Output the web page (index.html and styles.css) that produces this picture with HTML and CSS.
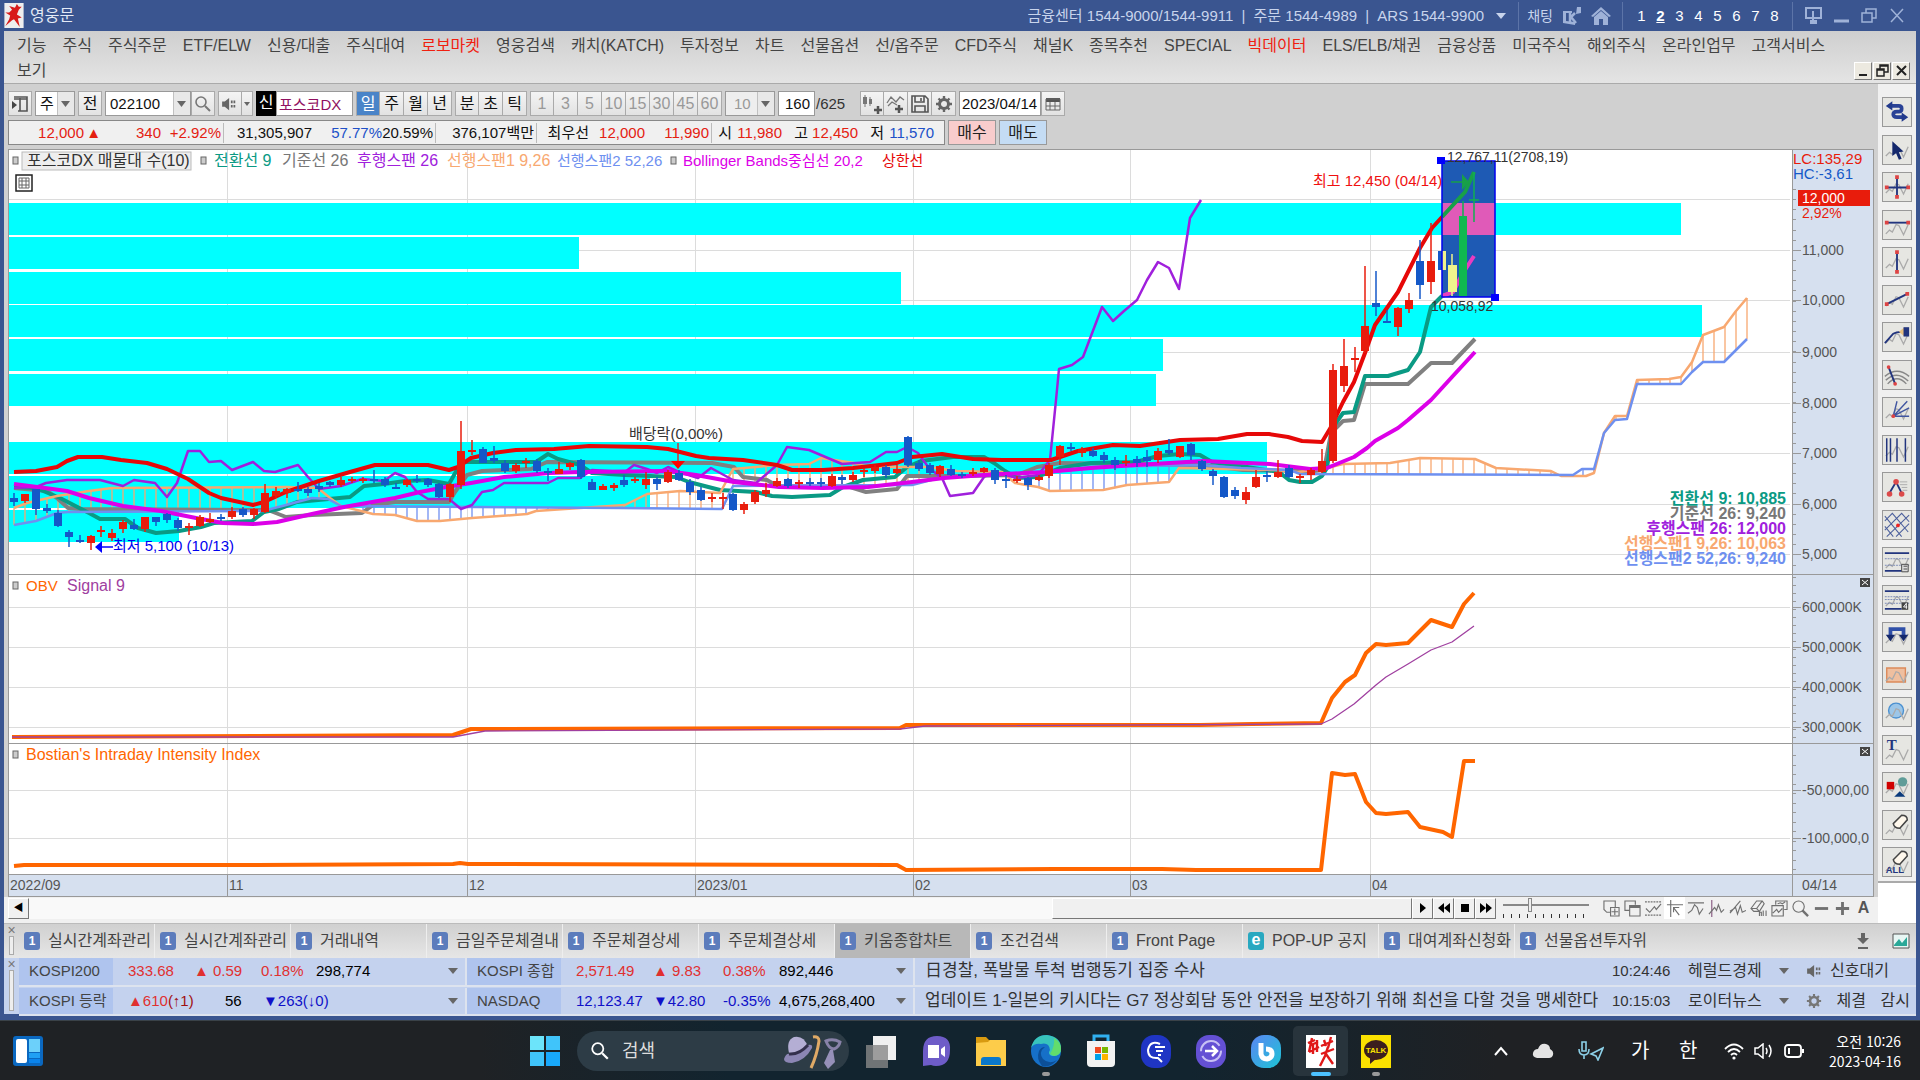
FILE: index.html
```
<!DOCTYPE html>
<html lang="ko">
<head>
  <meta charset="UTF-8">
  <meta name="viewport" content="width=device-width, initial-scale=1.0">
  <title>영웅문</title>
  <link rel="stylesheet" href="styles.css">
</head>
<body>
  <svg class="defs" aria-hidden="true">
    <symbol id="wave" viewBox="0 0 30 29"><path d="M3 21l4-4 3 2 4-8 3 1 5 10 5-11" fill="none" stroke="#aaa" stroke-width="1.4"/></symbol>
    <symbol id="hero" viewBox="0 0 20 26"><path d="M0 0h20v26H0z" fill="#eee"/><path d="M13 1l-2 4-6-2 3 4-3 3-4 0 5 3-1 4-4 7 7-6 2-1 6 8-2-9 4-1-5-3 2-5 3-3-3 0z" fill="#d81a1a"/></symbol>
    <symbol id="speaker" viewBox="0 0 20 16"><path d="M1 5h3l5-4v14l-5-4H1z" fill="#666"/><path d="M12 4v3m0 2v3m3-8v3m0 2v3" stroke="#666" stroke-width="2"/></symbol>
    <symbol id="search" viewBox="0 0 18 18"><circle cx="7" cy="7" r="5" fill="none" stroke="currentColor" stroke-width="1.6"/><path d="M11 11l5 5" stroke="currentColor" stroke-width="2"/></symbol>
    <symbol id="gear" viewBox="0 0 18 18"><circle cx="9" cy="9" r="4.5" fill="none" stroke="currentColor" stroke-width="3"/><path d="M9 1v3m0 10v3M1 9h3m10 0h3M3.500 3.500l2 2m7 7l2 2m0-11l-2 2m-7 7l-2 2" stroke="currentColor" stroke-width="2.400"/></symbol>
  </svg>

  <div class="app">
    <header class="titlebar">
      <svg class="logo" width="20" height="25"><use href="#hero"/></svg>
      <h1>영웅문</h1>
      <div class="phones">금융센터 1544-9000/1544-9911 <i>|</i> 주문 1544-4989 <i>|</i> ARS 1544-9900 <span class="caret light"></span></div>
      <div class="quick">
        <a href="#">채팅</a>
        <svg width="20" height="20" viewBox="0 0 20 20"><path d="M1 5h9v2H4v8l9 1v3l-12-2z" fill="#9fb2d8"/><path d="M8 7v9m0-4l5-5m-4 4l5 6" stroke="#9fb2d8" stroke-width="2.500"/><path d="M15 1h4v6l-5 1z" fill="#9fb2d8"/></svg>
        <svg width="20" height="20" viewBox="0 0 20 20"><path d="M0 10L10 1l10 9-2 1-8-7-8 7zM3 11l7-6 7 6v8h-5v-6H8v6H3z" fill="#9fb2d8"/></svg>
      </div>
      <div class="screens">
        <button>1</button><button class="on">2</button><button>3</button><button>4</button><button>5</button><button>6</button><button>7</button><button>8</button>
      </div>
      <div class="winbtns">
        <button aria-label="화면"><svg width="17" height="17" viewBox="0 0 17 17"><path d="M1 1h15v10H1zM6 14h5v2H6zM8 4v9" fill="none" stroke="#9fb2d8" stroke-width="2"/></svg></button>
        <button aria-label="최소화"><svg width="17" height="17" viewBox="0 0 17 17"><path d="M1 14h15" stroke="#9fb2d8" stroke-width="3"/></svg></button>
        <button aria-label="복원"><svg width="17" height="17" viewBox="0 0 17 17"><path d="M1 6h10v9H1zM5 6V2h10v9h-4" fill="none" stroke="#9fb2d8" stroke-width="1.500"/></svg></button>
        <button aria-label="닫기"><svg width="17" height="17" viewBox="0 0 17 17"><path d="M2 2l12 13M14 2L2 15" stroke="#9fb2d8" stroke-width="1.500"/></svg></button>
      </div>
    </header>

    <nav class="menubar">
      <div class="menu">
        <a href="#">기능</a><a href="#">주식</a><a href="#">주식주문</a><a href="#">ETF/ELW</a><a href="#">신용/대출</a><a href="#">주식대여</a><a href="#" class="hot">로보마켓</a><a href="#">영웅검색</a><a href="#">캐치(KATCH)</a><a href="#">투자정보</a><a href="#">차트</a><a href="#">선물옵션</a><a href="#">선/옵주문</a><a href="#">CFD주식</a><a href="#">채널K</a><a href="#">종목추천</a><a href="#">SPECIAL</a><a href="#" class="hot">빅데이터</a><a href="#">ELS/ELB/채권</a><a href="#">금융상품</a><a href="#">미국주식</a><a href="#">해외주식</a><a href="#">온라인업무</a><a href="#">고객서비스</a>
      </div>
      <div class="menu second">
        <a href="#">보기</a>
        <div class="childbtns">
          <button aria-label="창 최소화"><svg width="15" height="15" viewBox="0 0 15 15"><path d="M3 12h8" stroke="#222" stroke-width="2"/></svg></button>
          <button aria-label="창 복원"><svg width="15" height="15" viewBox="0 0 15 15"><path d="M2 6h7v7H2zM5 6V2h8v7H9M2 7h7M5 3h8" fill="none" stroke="#222" stroke-width="1.500"/></svg></button>
          <button aria-label="창 닫기"><svg width="15" height="15" viewBox="0 0 15 15"><path d="M3 3l9 9M12 3l-9 9" stroke="#222" stroke-width="2"/></svg></button>
        </div>
      </div>
    </nav>

    <main class="workspace">
      <section class="chart-window">
        <div class="toolbar">
          <button class="btn" aria-label="목록"><svg width="18" height="18" viewBox="0 0 18 18"><path d="M1 6v8l5-4z" fill="#444"/><path d="M3 2h13v14H7M9 3v13M3 4h13" fill="none" stroke="#555" stroke-width="1.600"/></svg></button>
          <select class="field w40" aria-label="종목 구분"><option>주</option></select>
          <button class="btn">전</button>
          <span class="group">
            <select class="field w86" aria-label="종목 코드"><option>022100</option></select>
            <button class="btn" aria-label="종목 찾기"><svg width="18" height="18" color="#777"><use href="#search"/></svg></button>
          </span>
          <span class="group">
            <button class="btn" aria-label="소리"><svg width="18" height="14"><use href="#speaker"/></svg></button>
            <button class="btn slim" aria-label="소리 설정"><span class="caret"></span></button>
          </span>
          <span class="group"><b class="new">신</b><input class="field name" value="포스코DX" aria-label="종목명"></span>
          <span class="group">
            <button class="btn on">일</button><button class="btn">주</button><button class="btn">월</button><button class="btn">년</button>
          </span>
          <span class="group"><button class="btn">분</button><button class="btn">초</button><button class="btn">틱</button></span>
          <span class="group off">
            <button class="btn">1</button><button class="btn">3</button><button class="btn">5</button><button class="btn">10</button><button class="btn">15</button><button class="btn">30</button><button class="btn">45</button><button class="btn">60</button>
          </span>
          <select class="field w50 off" aria-label="분봉"><option>10</option></select>
          <span class="group count"><input class="field w37" value="160" aria-label="봉 개수"><span>/625</span></span>
          <span class="group">
            <button class="btn" aria-label="차트 종류"><svg width="20" height="20" viewBox="0 0 20 20"><path d="M3 1v12M8 3v9" stroke="#777"/><path d="M1 3h4v7H1zM7 5h3v5H7z" fill="#777"/><path d="M12 16h8m-4-4v8" stroke="#555" stroke-width="2.500"/></svg></button>
            <button class="btn" aria-label="지표 추가"><svg width="20" height="20" viewBox="0 0 20 20"><path d="M1 9l4-6 5 5 4-5 4 3M2 12l4-4 5 3" fill="none" stroke="#777" stroke-width="1.300"/><path d="M9 15h8m-4-4v8" stroke="#555" stroke-width="2.500"/></svg></button>
            <button class="btn" aria-label="저장"><svg width="18" height="18" viewBox="0 0 18 18"><path d="M1 1h13l3 3v13H1zM4 1v6h9V1M4 17v-6h10v6M10 3v3" fill="none" stroke="#555" stroke-width="1.600"/></svg></button>
            <button class="btn" aria-label="설정"><svg width="18" height="18" color="#666"><use href="#gear"/></svg></button>
          </span>
          <span class="group">
            <input class="field date" value="2023/04/14" aria-label="조회일">
            <button class="btn" aria-label="달력"><svg width="16" height="16" viewBox="0 0 16 16"><path d="M1 2h14v4H1z" fill="#555"/><path d="M1 3h14v11H1zM5 6v8m5-8v8M1 10h14" fill="none" stroke="#666"/></svg></button>
          </span>
        </div>

        <div class="quotebar">
          <div class="quote">
            <span class="up">12,000</span><span class="up mark">▲</span><span class="up">340</span><span class="up sep">+2.92%</span>
            <span>31,305,907</span><span class="down">57.77%</span><span class="sep">20.59%</span><span class="sep">376,107백만</span>
            <span>최우선</span><span class="up">12,000</span><span class="up sep">11,990</span>
            <span>시</span><span class="up">11,980</span><span>고</span><span class="up">12,450</span><span>저</span><span class="down">11,570</span>
          </div>
          <button class="trade buy">매수</button>
          <button class="trade sell">매도</button>
        </div>

        <svg id="chart" class="chart" viewBox="8 149 1866 748" role="img" aria-label="포스코DX 일봉 차트"></svg>

        <div class="scrollrow">
          <button class="arrow" aria-label="왼쪽">◀</button>
          <div class="track"><div class="thumb"></div></div>
          <button class="arrow" aria-label="재생"><svg width="12" height="12"><path d="M3 1v10l6-5z"/></svg></button>
          <button class="arrow" aria-label="뒤로"><svg width="12" height="12"><path d="M6 1v10L0 6zM12 1v10L6 6z"/></svg></button>
          <button class="arrow" aria-label="정지"><svg width="12" height="12"><path d="M2 2h8v8H2z"/></svg></button>
          <button class="arrow" aria-label="앞으로"><svg width="12" height="12"><path d="M0 1v10l6-5zM6 1v10l6-5z"/></svg></button>
          <div class="slider"><input type="range" min="0" max="100" value="30" aria-label="재생 속도"></div>
          <div class="minitools">
            <button aria-label="추가"><svg viewBox="0 0 18 18"><path d="M8 13H4l-3-3V1h12v7M8 8h9v9H8zM12.500 9v7M9 12.500h7"/></svg></button>
            <button aria-label="겹치기"><svg viewBox="0 0 18 18"><path d="M6 11H1V1h11v4M6 6h11v11H6z"/><path d="M6 7h11" stroke-width="3"/></svg></button>
            <button aria-label="범위"><svg viewBox="0 0 18 18"><path d="M0 2h17M0 16h17" stroke-dasharray="2 1"/><path d="M1 9l4 4 5-6 2 3 5-6"/></svg></button>
            <button aria-label="십자선" class="on"><svg viewBox="0 0 18 18"><path d="M1 5h17M5 0v18M8 8l6 8M8 13V8h6"/></svg></button>
            <button aria-label="수평선"><svg viewBox="0 0 18 18"><path d="M1 3h17M1 14l4-3 3-6 3 3 2 7 4-6"/></svg></button>
            <button aria-label="수직선"><svg viewBox="0 0 18 18"><path d="M4 0v18" stroke="#86587f"/><path d="M1 15l6-7 2 3 2-6 3 8 3-3"/></svg></button>
            <button aria-label="추세선"><svg viewBox="0 0 18 18"><path d="M1 14L12 1M1 12l6-4 2 7 3-9 2 7 4-2"/></svg></button>
            <button aria-label="모두 지우기"><svg viewBox="0 0 18 18"><path d="M1 9l6-8h6l2 3-5 8H4zM1 9h6l3 3M7 9l6-8M10 17v-4h2v4m2-6v6m3-6v6"/></svg></button>
            <button aria-label="창 배열"><svg viewBox="0 0 18 18"><path d="M5 5V1h12v9h-3M1 6h12v11H1zM2 14l4-4 2 3 4-4M7 4l3-1 2 1 3-2"/></svg></button>
            <button aria-label="돋보기"><svg viewBox="0 0 18 18"><circle cx="7" cy="7" r="6"/><path d="M11 11l6 6" stroke-width="2.500"/></svg></button>
            <button aria-label="축소"><svg viewBox="0 0 18 18"><path d="M2 9h14" stroke-width="3"/></svg></button>
            <button aria-label="확대"><svg viewBox="0 0 18 18"><path d="M2 9h14M9 2v14" stroke-width="3"/></svg></button>
            <button aria-label="자동"><b>A</b></button>
          </div>
        </div>
      </section>

      <aside class="tools">
        <div class="tool-list">
          <button aria-label="전환"><svg viewBox="0 0 30 29"><path d="M9 8h8q3 0 3 3t-3 3h-2q-4 0-4 3t4 3h6" fill="none" stroke="#2a4296" stroke-width="4"/><path d="M3 8l7-5v10zM27 20l-7-5v10z" fill="#223a8c"/></svg></button>
          <button aria-label="선택"><svg viewBox="0 0 30 29"><use href="#wave"/><path d="M10 5v16l4-3 3 7 3-1-3-7 5-1z" fill="#14286c"/></svg></button>
          <button aria-label="십자선"><svg viewBox="0 0 30 29"><use href="#wave"/><path d="M4 15h23M15 4v21" stroke="#22357e" stroke-width="2"/><path d="M2 13h4v4H2zM25 13h4v4h-4zM13 2h4v4h-4zM13 23h4v4h-4z" fill="#d44"/></svg></button>
          <button aria-label="수평선"><svg viewBox="0 0 30 29"><use href="#wave" y="3"/><path d="M4 12h23" stroke="#22357e" stroke-width="2"/><path d="M2 10h4v4H2zM25 10h4v4h-4z" fill="#d44"/></svg></button>
          <button aria-label="수직선"><svg viewBox="0 0 30 29"><use href="#wave"/><path d="M15 4v21" stroke="#22357e" stroke-width="2"/><path d="M13 2h4v4h-4zM13 23h4v4h-4z" fill="#d44"/></svg></button>
          <button aria-label="추세선"><svg viewBox="0 0 30 29"><use href="#wave"/><path d="M4 19L26 8" stroke="#22357e" stroke-width="2"/><path d="M2 17h4v4H2zM24 6h4v4h-4z" fill="#d44"/></svg></button>
          <button aria-label="연필"><svg viewBox="0 0 30 29"><use href="#wave"/><path d="M2 21l9-10q3-2 9-2" fill="none" stroke="#22357e" stroke-width="2"/><path d="M17 9l6-5v10z" fill="#e8c080"/><path d="M22 4h6v10h-6z" fill="#22357e"/></svg></button>
          <button aria-label="호"><svg viewBox="0 0 30 29"><path d="M2 16q13-11 26 0M3 20q12-11 24 1M5 24q10-11 20 0" fill="none" stroke="#888" stroke-width="1.500"/><path d="M6 6l7 18" stroke="#22357e" stroke-width="2"/><circle cx="6" cy="6" r="2" fill="#d44"/><circle cx="13" cy="24" r="2" fill="#d44"/></svg></button>
          <button aria-label="부채꼴"><svg viewBox="0 0 30 29"><use href="#wave"/><path d="M11 19L15 3M11 19L26 3M11 19l17-9M11 19h17" stroke="#4055a0" stroke-width="1.500"/><circle cx="11" cy="19" r="2" fill="#d44"/></svg></button>
          <button aria-label="시간대"><svg viewBox="0 0 30 29"><use href="#wave"/><path d="M4 2v25M8 2v25M15 2v25M24 2v25" stroke="#22357e" stroke-width="1.600"/></svg></button>
          <button aria-label="패턴"><svg viewBox="0 0 30 29"><path d="M18 9h8M18 12h8M20 15h6M21 18h5" stroke="#aaa"/><path d="M7 21l7-12 6 12" fill="none" stroke="#22357e" stroke-width="2"/><g fill="#dc4a4a"><circle cx="7" cy="22" r="3"/><circle cx="14" cy="9" r="3"/><circle cx="20" cy="22" r="3"/></g></svg></button>
          <button aria-label="격자"><svg viewBox="0 0 30 29"><path d="M2 10l8-8 17 20M2 20L20 2l8 9M4 27L28 4M2 5l18 22M2 16l9 11M14 27l14-14" fill="none" stroke="#4b5f9c" stroke-width="1.100"/><circle cx="16" cy="15" r="2" fill="#e22"/></svg></button>
          <button aria-label="되돌림"><svg viewBox="0 0 30 29"><use href="#wave"/><path d="M2 5h26M2 24h18" stroke="#22357e" stroke-width="2"/><path d="M2 11h26M2 18h26" stroke="#7585b5" stroke-dasharray="2 1"/><path d="M20 17h7v8h-7zM22 19h4M22 22h4" fill="#ddd" stroke="#444"/></svg></button>
          <button aria-label="4등분"><svg viewBox="0 0 30 29"><use href="#wave"/><path d="M2 5h26M2 24h18" stroke="#22357e" stroke-width="2"/><path d="M2 11h26M2 14h26M2 18h26" stroke="#7585b5" stroke-dasharray="2 1"/><path d="M20 17h7v8h-7z" fill="#444"/><path d="M25 24v-6l-3 4h4" fill="none" stroke="#fff"/></svg></button>
          <button aria-label="이동"><svg viewBox="0 0 30 29"><use href="#wave"/><path d="M8 13V6h14v7" fill="none" stroke="#3050a8" stroke-width="4"/><path d="M3 12h10l-5 7zM17 12h10l-5 7z" fill="#14286c"/></svg></button>
          <button aria-label="사각형"><svg viewBox="0 0 30 29"><path d="M4 7h20v15H4z" fill="#efbf9f" stroke="#dc8a5a" stroke-width="1.500"/><use href="#wave"/></svg></button>
          <button aria-label="원"><svg viewBox="0 0 30 29"><circle cx="14" cy="13" r="8" fill="#9cc6e8" stroke="#4a90d0" stroke-width="1.500"/><use href="#wave"/></svg></button>
          <button aria-label="글자"><svg viewBox="0 0 30 29"><use href="#wave" y="3"/><text x="4" y="15" class="ico-t">T</text></svg></button>
          <button aria-label="도형"><svg viewBox="0 0 30 29"><use href="#wave"/><path d="M4 9h8v8H4z" fill="#d00000"/><circle cx="21" cy="9" r="5" fill="#5f9c98"/><path d="M12 25l6-6 6 6z" fill="#0a3a7c"/></svg></button>
          <button aria-label="지우개"><svg viewBox="0 0 30 29"><use href="#wave" y="3"/><path d="M11 13l9-9q6 0 6 5l-8 9q-6 0-7-5z" fill="#fff8ec" stroke="#444" stroke-width="1.600"/></svg></button>
          <button aria-label="전체 지우개"><svg viewBox="0 0 30 29"><use href="#wave" y="3"/><path d="M11 12l9-9q6 0 6 5l-8 9q-6 0-7-5z" fill="#fff8ec" stroke="#444" stroke-width="1.600"/><text x="3" y="26" class="ico-all">ALL</text></svg></button>
        </div>
        <div class="tools-end"></div>
      </aside>
    </main>

    <nav class="tabs">
      <div class="grip"><button aria-label="탭 닫기">×</button><i></i></div>
      <button class="tab"><b>1</b>실시간계좌관리</button>
      <button class="tab"><b>1</b>실시간계좌관리</button>
      <button class="tab"><b>1</b>거래내역</button>
      <button class="tab"><b>1</b>금일주문체결내</button>
      <button class="tab"><b>1</b>주문체결상세</button>
      <button class="tab"><b>1</b>주문체결상세</button>
      <button class="tab on"><b>1</b>키움종합차트</button>
      <button class="tab"><b>1</b>조건검색</button>
      <button class="tab"><b>1</b>Front Page</button>
      <button class="tab"><b class="web">e</b>POP-UP 공지</button>
      <button class="tab"><b>1</b>대여계좌신청화</button>
      <button class="tab"><b>1</b>선물옵션투자위</button>
      <div class="tab-tools">
        <svg width="14" height="18" viewBox="0 0 14 18"><path d="M5 1h4v5h4l-6 6-6-6h4zM2 15h10v2H2z" fill="#666"/></svg>
        <svg width="18" height="16" viewBox="0 0 18 16"><path d="M1 1h16v14H1z" fill="#e8f6f4" stroke="#555"/><path d="M2 12l5-6 3 4 5-6v9H2z" fill="#2aa898"/></svg>
      </div>
    </nav>

    <section class="ticker">
      <div class="grip"><button aria-label="시세줄 닫기">×</button><i></i></div>
      <div class="rows">
        <div class="row">
          <b class="label">KOSPI200</b>
          <div class="cells"><span class="rise">333.68</span><span class="rise">▲ 0.59</span><span class="rise">0.18%</span><span>298,774</span><i class="caret"></i></div>
          <b class="label">KOSPI 종합</b>
          <div class="cells wide"><span class="rise">2,571.49</span><span class="rise">▲ 9.83</span><span class="rise">0.38%</span><span>892,446</span><i class="caret"></i></div>
          <a href="#" class="news">日경찰, 폭발물 투척 범행동기 집중 수사</a>
          <time>10:24:46</time><span class="source">헤럴드경제</span><i class="caret"></i>
          <div class="status"><svg width="18" height="14"><use href="#speaker"/></svg><a href="#">신호대기</a></div>
        </div>
        <div class="row">
          <b class="label">KOSPI 등락</b>
          <div class="cells breadth"><span class="rise">▲610<em>(↑1)</em></span><span>56</span><span class="fall">▼263(↓0)</span><i class="caret"></i></div>
          <b class="label">NASDAQ</b>
          <div class="cells wide"><span class="fall">12,123.47</span><span class="fall">▼42.80</span><span class="fall">-0.35%</span><span>4,675,268,400</span><i class="caret"></i></div>
          <a href="#" class="news">업데이트 1-일본의 키시다는 G7 정상회담 동안 안전을 보장하기 위해 최선을 다할 것을 맹세한다</a>
          <time>10:15:03</time><span class="source">로이터뉴스</span><i class="caret"></i>
          <div class="status split"><svg width="16" height="16" color="#777"><use href="#gear"/></svg><a href="#">체결</a><a href="#">감시</a></div>
        </div>
      </div>
    </section>
  </div>

  <footer class="taskbar">
    <div class="side">
      <button aria-label="위젯"><svg width="30" height="30" viewBox="0 0 30 30"><rect width="30" height="30" rx="3" fill="#0a68c0"/><rect x="3" y="3" width="11" height="24" rx="2" fill="#fff"/><path d="M16 3h11v13H16z" fill="#6cd0fa"/><path d="M16 17h11v5H16z" fill="#20a0f4"/><path d="M16 23h11v4H16z" fill="#0a84ec"/></svg></button>
    </div>
    <div class="apps">
      <button aria-label="시작"><svg width="30" height="30" viewBox="0 0 30 30"><path d="M0 0h14v14H0z" fill="#6ce4fa"/><path d="M16 0h14v14H16zM0 16h14v14H0z" fill="#40c4fa"/><path d="M16 16h14v14H16z" fill="#18a8fa"/></svg></button>
      <label class="find"><svg width="20" height="20"><use href="#search" /></svg><input type="search" placeholder="검색" aria-label="검색">
        <svg width="60" height="38" viewBox="0 0 60 38"><path d="M6 21Q3 8 11 5q10-2 14 10-8 8-19 6z" fill="#b4aed4"/><path d="M1 27q2-6 6-5 10 1 18-9 5-1 4 3-7 13-20 15-8 0-8-4z" fill="#8c86b4"/><path d="M6 22q10 1 19-9" fill="none" stroke="#34304c" stroke-width="3"/><path d="M28 36q6-13 8-27 0-5-6-4" fill="none" stroke="#e0aa66" stroke-width="3"/><path d="M43 9q3 8 8 8 5-2 6-7-7-4-14-1z" fill="none" stroke="#8882a8" stroke-width="3"/><path d="M47 18l-6 13 4 6 7-7-2-12z" fill="#9690b8"/></svg>
      </label>
      <button aria-label="작업 보기"><svg width="30" height="34" viewBox="0 0 30 34"><path d="M7 2h23v24H7z" fill="#f0f0f0"/><path d="M0 11h22v23H0z" fill="#888" opacity=".8"/></svg></button>
      <button aria-label="채팅"><svg width="30" height="34" viewBox="0 0 30 34"><path d="M2 32V17q0-15 14-15t13 14q0 16-14 16-3 0-5-1z" fill="#6e5cc8"/><path d="M7 11h11v13H7zM20 15l4-3v11l-4-3z" fill="#fff"/></svg></button>
      <button aria-label="탐색기"><svg width="30" height="34" viewBox="0 0 30 34"><path d="M0 3h10l3 3h17v25H0z" fill="#d89a10"/><path d="M0 9l12-1 2-2h16v26H0z" fill="#fdcc4a"/><path d="M5 31v-5q0-3 3-3h14q3 0 3 3v5z" fill="#0a78cc"/></svg></button>
      <button class="running" aria-label="엣지"><svg width="30" height="34" viewBox="0 0 30 34"><ellipse cx="15" cy="17" rx="15" ry="16" fill="#1670c8"/><path d="M0 14Q3 1 16 1q14 2 14 13 0 9-9 8-5-2-2-6-1-8-9-6Q3 9 0 14z" fill="#38c4bc"/><path d="M23 4q7 4 7 11 0 6-7 7l-4-2q5-8 4-16z" fill="#62dc6c"/><path d="M14 13q-7 5-2 12 6 6 14 1-7 8-15 6Q5 25 8 17q2-4 6-4z" fill="#0c4f98"/></svg></button>
      <button aria-label="스토어"><svg width="30" height="34" viewBox="0 0 30 34"><path d="M8 8V2h14v6" fill="none" stroke="#30b0f0" stroke-width="3"/><path d="M1 7h28v22q0 4-4 4H5q-4 0-4-4z" fill="#f2f2f2"/><path d="M9 13h6v6H9z" fill="#f04a20"/><path d="M16 13h6v6h-6z" fill="#78b800"/><path d="M9 20h6v6H9z" fill="#00a0e8"/><path d="M16 20h6v6h-6z" fill="#fcb400"/></svg></button>
      <button aria-label="퀵서치"><svg width="30" height="34" viewBox="0 0 30 34"><rect y="1" width="30" height="33" rx="13" fill="#1f35c4"/><path d="M19 10q-10-4-12 6 0 9 10 8l4 4M14 13h10M15 17h7M17 21h3" fill="none" stroke="#fff" stroke-width="2"/></svg></button>
      <button aria-label="퀵셰어"><svg width="30" height="34" viewBox="0 0 30 34"><rect y="1" width="30" height="33" rx="13" fill="#6450d4"/><circle cx="15" cy="17" r="10" fill="none" stroke="#c8c0f4" stroke-width="2" stroke-dasharray="26 5"/><path d="M9 17h11m-4-5l5 5-5 5" fill="none" stroke="#fff" stroke-width="2.500"/></svg></button>
      <button aria-label="빅스비"><svg width="30" height="34" viewBox="0 0 30 34"><defs><linearGradient id="bix" x1="0" y1="0" x2="1" y2="1"><stop offset="0" stop-color="#5c86f4"/><stop offset="1" stop-color="#1cc4d4"/></linearGradient></defs><rect y="1" width="30" height="33" rx="13" fill="url(#bix)"/><path d="M10 9v11q1 5 6 5 5-1 5-5 0-5-6-5" fill="none" stroke="#fff" stroke-width="5"/></svg></button>
      <button class="running active" aria-label="영웅문"><svg width="30" height="34" viewBox="0 0 30 34"><path d="M0 1h30v33H0z" fill="#fff"/><path d="M2 9l7-3M6 4L3 18M5 11l7-3M7 10v10M11 6v12M3 18l10-5M15 12l12-5M18 6l2 6M25 3l-3 11M15 20l13-5M22 13l-3 9-5 10M20 20l7 10" fill="none" stroke="#e01818" stroke-width="2.400"/></svg></button>
      <button class="running" aria-label="카카오톡"><svg width="30" height="34" viewBox="0 0 30 34"><path d="M0 1h30v33H0z" fill="#fae100"/><ellipse cx="15" cy="16" rx="12" ry="10" fill="#3b1e1e"/><path d="M9 23v7l7-6z" fill="#3b1e1e"/><text x="15" y="19" class="talk">TALK</text></svg></button>
    </div>
    <div class="tray">
      <svg width="14" height="12" viewBox="0 0 14 12"><path d="M1 10l6-7 6 7" fill="none" stroke="#fff" stroke-width="2"/></svg>
      <svg width="22" height="16" viewBox="0 0 22 16"><path d="M5 15q-5-1-4-5t5-4q2-6 8-5 4 1 4 5 4 2 3 6-1 3-4 3z" fill="#e4e4e4"/></svg>
      <svg width="26" height="20" viewBox="0 0 26 20"><path d="M4 1h4v9H4zM1 8q0 6 5 6t5-6M6 14v4" fill="none" stroke="#8cd0e8" stroke-width="1.600"/><path d="M13 13l12-6-5 12-2-4z" fill="none" stroke="#8cd0e8" stroke-width="1.600"/></svg>
      <button>가</button>
      <button>한</button>
      <div class="system">
        <svg width="20" height="18" viewBox="0 0 20 18"><path d="M1 7q9-9 18 0M4 10q6-6 12 0M7 13q3-3 6 0" fill="none" stroke="#fff" stroke-width="1.800"/><circle cx="10" cy="16" r="1.600" fill="#fff"/></svg>
        <svg width="20" height="16" viewBox="0 0 20 16"><path d="M1 5h3l5-4v14l-5-4H1zM12 5q2 3 0 6M15 2q4 6 0 12" fill="none" stroke="#fff" stroke-width="1.500"/></svg>
        <svg width="21" height="16" viewBox="0 0 21 16"><rect x="1" y="2" width="16" height="12" rx="3" fill="none" stroke="#fff" stroke-width="1.800"/><path d="M4 5h2v6H4zM18 6h2v4h-2z" fill="#fff"/></svg>
      </div>
      <div class="clock"><span>오전 10:26</span><span>2023-04-16</span></div>
    </div>
  </footer>
  <script src="chart.js"></script>
</body>
</html>
```
FILE: styles.css
```
* {
  box-sizing: border-box;
}

body {
  margin: 0;
  min-height: 100vh;
  display: flex;
  flex-direction: column;
  background: #1f2225;
  color: #222;
  font-family: "Liberation Sans", "Noto Sans CJK KR", sans-serif;
  font-size: 16px;
  line-height: 20px;
  overflow-x: hidden;
}

button, input, select {
  font: inherit;
  color: inherit;
  margin: 0;
  padding: 0;
}

button {
  border: 0;
  background: none;
  display: flex;
  align-items: center;
  justify-content: center;
}

a {
  color: inherit;
  text-decoration: none;
}

svg {
  flex: none;
}

.defs {
  position: absolute;
  width: 0;
  height: 0;
}

.caret {
  display: inline-block;
  border: 5px solid transparent;
  border-top: 6px solid #666;
  border-bottom: 0;
}

.caret.light {
  border-top-color: #c8d4ec;
  margin: 0 0 2px 8px;
}

.app {
  flex: 1;
  display: flex;
  flex-direction: column;
  padding: 0 4px 6px;
  background: #3a5590;
}

/* title bar */
.titlebar {
  display: flex;
  align-items: center;
  height: 31px;
  color: #c8d4ec;
  font-size: 15px;
}

.titlebar h1 {
  flex: 1;
  margin: 0 0 0 6px;
  font-size: 16px;
  font-weight: normal;
  color: #e4eaf6;
}

.titlebar i {
  font-style: normal;
  padding: 0 4px;
}

.phones {
  padding-right: 12px;
}

.quick, .screens, .winbtns {
  display: flex;
  align-items: center;
  height: 28px;
  border-left: 1px solid #5c74a8;
}

.quick {
  gap: 9px;
  padding: 0 11px 0 8px;
  font-size: 14px;
}

.screens {
  padding: 0 8px 0 9px;
}

.screens button {
  width: 19px;
  color: #fff;
}

.screens .on {
  text-decoration: underline;
  font-weight: bold;
}

.winbtns {
  gap: 11px;
  padding: 0 10px 0 12px;
}

/* menu */
.menubar {
  height: 53px;
  background: linear-gradient(#cfcfcf, #e4e4e4);
  border-bottom: 1px solid #aaa;
  padding: 2px 6px 0 13px;
  color: #444;
}

.menu {
  display: flex;
  gap: 16px;
  height: 25px;
  align-items: center;
  white-space: nowrap;
}

.hot {
  color: #f02010;
}

.childbtns {
  display: flex;
  gap: 1px;
  margin-left: auto;
}

.childbtns button {
  width: 18px;
  height: 18px;
  background: #ece9e0;
  border: 1px solid;
  border-color: #fff #777 #777 #fff;
}

/* chart window */
.workspace {
  display: flex;
  background: #d0d0d0;
}

.chart-window {
  flex: 1;
  min-width: 0;
}

.toolbar {
  display: flex;
  gap: 3px;
  padding: 7px 4px 4px;
}

.group {
  display: flex;
}

.btn {
  width: 24px;
  height: 25px;
  color: #111;
  background: linear-gradient(#f4f4f4, #e2e2e2);
  border: 1px solid #aaa;
}

.btn.slim {
  width: 11px;
}

.group .btn + .btn {
  border-left: 0;
}

.btn.on {
  background: #4a84c8;
  color: #fff;
}

.off .btn {
  color: #999;
}

.slim .caret {
  border-width: 4px 3px 0;
}

.field {
  height: 25px;
  border: 1px solid #999;
  border-radius: 0;
  background: #fff;
  color: #111;
  font-size: 15px;
  padding: 0 4px;
}

select.field {
  appearance: none;
  background: #fff url("data:image/svg+xml,%3Csvg xmlns='http://www.w3.org/2000/svg' width='17' height='25'%3E%3Cpath d='M0 0h17v25H0z' fill='%23e8e8e8'/%3E%3Cpath d='M0 0v25' stroke='%23999'/%3E%3Cpath d='M4 10h9l-4.5 6z' fill='%23666'/%3E%3C/svg%3E") right center no-repeat;
}

select.off {
  color: #999;
  background-color: #eee;
}

.w40 { width: 40px; }
.w86 { width: 86px; }
.w50 { width: 50px; padding-left: 8px; }
.w37 { width: 37px; text-align: right; }
.date { width: 82px; padding: 0 2px; }

.new {
  width: 20px;
  background: #000;
  color: #fff;
  font-weight: normal;
  text-align: center;
  line-height: 24px;
}

.field.name {
  width: 77px;
  padding: 0 2px;
  color: #901060;
}

.count {
  width: 79px;
  align-items: center;
  gap: 1px;
  color: #333;
  font-size: 15px;
}

.quotebar {
  display: flex;
  gap: 3px;
  padding: 0 4px 4px;
}

.quote {
  display: grid;
  grid-template-columns: 75px 17px 60px 63px 88px 70px 54px 101px 52px 56px 67px 20px 50px 26px 50px 26px 50px;
  align-items: center;
  height: 25px;
  width: 937px;
  background: #f0f0f0;
  border: 1px solid #888;
  font-size: 15px;
  text-align: right;
  color: #111;
}

.quote .sep {
  border-right: 1px solid #bbb;
  padding-right: 2px;
}

.up { color: #e42010; }
.down { color: #2050c8; }

.trade {
  width: 48px;
  height: 25px;
  border: 1px solid #999;
}

.buy { background: #f8cccc; }
.sell { background: #c4dcf4; }

.chart {
  display: block;
  width: calc(100% - 8px);
  height: auto;
  margin-left: 4px;
  background: #fff;
  font-size: 15px;
}

.chart .grid { stroke: #dcdcdc; }
.chart .frame { stroke: #999; fill: none; }
.chart .axis-bg { fill: #d6e0ef; }
.chart .profile { fill: #00ffff; }
.chart .axis { fill: #555; font-size: 14px; }
.chart .note { font-size: 14px; }
.chart .legend { font-size: 16px; }
.chart .value { font-size: 16px; font-weight: bold; text-anchor: end; }
.chart .line { fill: none; stroke-linejoin: round; }

.scrollrow {
  display: flex;
  align-items: center;
  height: 26px;
  background: #f0f0f0;
  padding: 0 4px 4px;
}

.arrow {
  width: 21px;
  height: 21px;
  background: #f0f0f0;
  border: 1px solid;
  border-color: #fff #777 #777 #fff;
  font-size: 10px;
  color: #000;
}

.track {
  flex: 1;
  display: flex;
  justify-content: flex-end;
  background: #f9f9f9;
}

.thumb {
  width: 26%;
  height: 21px;
  background: #f0f0f0;
  border: 1px solid;
  border-color: #fff #777 #777 #fff;
}

.slider {
  width: 86px;
  margin: 0 12px 0 7px;
  padding-bottom: 6px;
  background: repeating-linear-gradient(90deg, #333 0 1px, transparent 1px 8px) bottom / 100% 4px no-repeat;
}

.slider input {
  appearance: none;
  display: block;
  width: 100%;
  height: 14px;
  background: linear-gradient(#888, #888) center / 100% 2px no-repeat;
}

.slider input::-webkit-slider-thumb {
  appearance: none;
  width: 4px;
  height: 14px;
  background: #eee;
  border: 1px solid #888;
}

.minitools {
  display: flex;
}

.minitools button {
  width: 21px;
  height: 22px;
  color: #555;
}

.minitools .on {
  background: #fff;
}

.minitools svg {
  width: 17px;
  height: 17px;
  fill: none;
  stroke: #707070;
  stroke-width: 1.2;
}

/* drawing tools */
.tools {
  width: 38px;
  display: flex;
  flex-direction: column;
  background: #f0f0f0;
}

.tool-list {
  flex: 1;
  display: flex;
  flex-direction: column;
  align-items: center;
  justify-content: space-between;
  padding: 13px 0 4px;
  border-bottom: 2px solid #aaa;
}

.tool-list button {
  width: 30px;
  height: 30px;
  background: #e6e6e2;
  border: 1px solid #999;
}

.tool-list svg {
  width: 28px;
  height: 28px;
}

.ico-t {
  font: bold 16px "Liberation Serif", serif;
  fill: #22357e;
}

.ico-all {
  font: bold 10px "Liberation Sans", sans-serif;
  fill: #22357e;
}

.tools-end {
  height: 40px;
  background: #fff;
}

/* window tabs */
.tabs {
  display: flex;
  height: 35px;
  background: linear-gradient(#d0d0d0, #e6e6e6);
  border-top: 1px solid #bbb;
  color: #444;
}

.grip {
  flex: none;
  width: 15px;
  display: flex;
  flex-direction: column;
  align-items: center;
  color: #777;
}

.grip button {
  height: 12px;
  font-size: 14px;
}

.grip i {
  flex: 1;
  width: 5px;
  margin-bottom: 3px;
  border: 1px solid #aaa;
  background: #eee;
}

.tab {
  flex: 0 0 136px;
  justify-content: flex-start;
  gap: 8px;
  padding-left: 5px;
  overflow: hidden;
  white-space: nowrap;
  border-right: 1px solid #eee;
}

.tab:nth-last-child(2) {
  border: 0;
}

.tab.on {
  background: #b8b8b8;
}

.tab b {
  width: 16px;
  height: 18px;
  border-radius: 3px;
  background: #5c7cbc;
  color: #fff;
  font-size: 12px;
  line-height: 18px;
}

.tab .web {
  background: #28a8c0;
  font-size: 16px;
  line-height: 16px;
}

.tab-tools {
  margin-left: auto;
  display: flex;
  align-items: center;
  gap: 22px;
  padding-right: 6px;
}

/* index ticker */
.ticker {
  flex: 1;
  display: flex;
  background: #c4d2ee;
}

.rows {
  flex: 1;
  display: flex;
  flex-direction: column;
  gap: 3px;
  min-width: 0;
}

.row {
  flex: 1;
  display: grid;
  grid-template-columns: 94px 354px 94px 354px minmax(0, 1fr) 84px 86px 20px 122px;
  align-items: center;
  background: #c4d2ee;
  box-shadow: 0 2px 0 #dde3ee;
  font-size: 15px;
  white-space: nowrap;
  color: #333;
}

.label {
  align-self: stretch;
  display: flex;
  align-items: center;
  padding-left: 10px;
  background: #afc4ee;
  font-weight: normal;
  color: #444;
}

.cells {
  display: grid;
  grid-template-columns: 66px 67px 55px 1fr 24px;
  padding-left: 15px;
  align-items: center;
  height: 100%;
  border-right: 2px solid #dde3ee;
  color: #000;
}

.cells.wide {
  grid-template-columns: 77px 70px 56px 1fr 24px;
}

.cells.breadth {
  grid-template-columns: 97px 38px 1fr 24px;
}

.row .caret {
  justify-self: center;
}

.rise { color: #e03030; }
.rise em { color: #a01010; font-style: normal; }
.fall { color: #1010c8; }

.news {
  padding-left: 10px;
  font-size: 17px;
}

.source {
  font-size: 16px;
}

.row time {
  padding-left: 8px;
}

.status {
  display: flex;
  align-items: center;
  gap: 6px;
  padding-left: 12px;
  font-size: 16px;
}

.status.split {
  justify-content: space-between;
  padding: 0 6px 0 12px;
}

/* windows taskbar */
.taskbar {
  height: 60px;
  display: flex;
  align-items: center;
  background: linear-gradient(90deg, #1f2225 0 25%, #12242f 38% 62%, #1f2124 78%);
  border-top: 1px solid #3a4248;
  color: #fff;
}

.side {
  width: 530px;
  padding-left: 13px;
}

.apps {
  flex: 1;
  display: flex;
  align-items: center;
}

.apps button {
  position: relative;
  width: 55px;
  height: 50px;
}

.apps button:first-child {
  width: 30px;
  margin-right: 17px;
}

.find {
  display: flex;
  align-items: center;
  gap: 12px;
  width: 272px;
  height: 40px;
  margin-right: 4px;
  padding: 0 6px 0 13px;
  border-radius: 20px;
  background: #2d3c46;
}

.find input {
  flex: 1;
  min-width: 0;
  border: 0;
  background: none;
  color: #fff;
  font-size: 18px;
}

.find input::placeholder {
  color: #ddd;
}

.running::after {
  content: "";
  position: absolute;
  bottom: 0;
  left: 24px;
  width: 8px;
  height: 4px;
  border-radius: 2px;
  background: #999;
}

.active {
  background: #28343c;
  border-radius: 5px;
}

.active::after {
  left: 18px;
  width: 20px;
  background: #4cc2ff;
}

.talk {
  font: bold 8px "Liberation Sans", sans-serif;
  fill: #fae100;
  text-anchor: middle;
}

.tray {
  display: flex;
  align-items: center;
  gap: 24px;
  padding-right: 19px;
}

.tray button {
  font-size: 20px;
  width: 24px;
}

.system {
  display: flex;
  align-items: center;
  gap: 10px;
}

.clock {
  display: flex;
  flex-direction: column;
  text-align: right;
  font-family: "Noto Sans CJK KR", sans-serif;
  font-size: 14px;
}
```
FILE: chart.js
```
const svg = document.getElementById('chart');
const NS = 'http://www.w3.org/2000/svg';

function add(name, attrs, text) {
  const el = document.createElementNS(NS, name);
  for (const key in attrs) el.setAttribute(key, attrs[key]);
  if (text !== undefined) el.textContent = text;
  svg.appendChild(el);
  return el;
}

const rect = (x, y, width, height, fill, extra) => add('rect', { x, y, width, height, fill, ...extra });
const text = (x, y, str, fill, cls) => add('text', { x, y, fill, class: cls || '' }, str);
const path = (d, stroke, width, cls) => add('path', { d, stroke, 'stroke-width': width || 1, fill: 'none', class: cls || '' });
const line = (points, stroke, width) => add('polyline', { points, stroke, 'stroke-width': width, class: 'line' });
const barX = i => 14.3 + i * 10.896;

// background and axes
add('rect', { x: 1792, y: 149, width: 82, height: 747, class: 'axis-bg' });
add('rect', { x: 8, y: 874, width: 1866, height: 22, class: 'axis-bg' });

const months = [[8, '2022/09'], [227, '11'], [467, '12'], [695, '2023/01'], [913, '02'], [1130, '03'], [1370, '04']];
const prices = [199, 250, 300, 352, 403, 453, 504, 554];
const obvGrid = [607, 647, 687, 727];
const iiiGrid = [790, 838];

months.slice(1).forEach(([x]) => add('path', { d: `M${x}.5 149V874`, class: 'grid' }));
[...prices, ...obvGrid, ...iiiGrid].forEach(y => add('path', { d: `M8 ${y}.5H1790`, class: 'grid' }));

// volume profile
[[203, 1681], [237, 579], [272, 901], [305, 1702], [339, 1163], [374, 1156], [442, 1267], [476, 650], [510, 179]]
  .forEach(([y, right]) => add('rect', { x: 8, y, width: right - 8, height: 32, class: 'profile' }));

// ichimoku cloud
const spanA = '14,508 27,503 57,496 89,491 112,488 286,487 318,488 330,498 341,506 373,514 395,515 417,521 440,521 472,518 527,514 536,511 580,508 625,505 647,494 680,491 720,493 733,469 777,465 809,464 821,458 854,463 868,467 928,467 957,471 1002,472 1015,483 1038,487 1050,491 1103,490 1127,485 1169,482 1179,468 1275,470 1298,472 1327,468 1343,464 1390,463 1420,458 1475,459 1496,468 1551,471 1561,476 1586,476 1594,473 1604,433 1615,416 1627,416 1637,380 1669,379 1681,377 1692,362 1703,335 1724,327 1736,311 1747,298';
const spanB = '14,525 36,521 57,513 68,512 263,511 286,505 312,498 328,499 341,506 620,508 722,509 733,486 912,485 939,478 979,475 1046,472 1091,467 1200,465 1241,468 1290,470 1300,474 1573,475 1582,469 1594,469 1604,433 1615,420 1627,419 1637,384 1681,384 1692,372 1703,362 1724,362 1747,339';

function valueAt(points, x) {
  const p = points.split(' ').map(s => s.split(',').map(Number));
  for (let i = 1; i < p.length; i++) {
    if (x <= p[i][0]) {
      const [x0, y0] = p[i - 1], [x1, y1] = p[i];
      return y0 + (y1 - y0) * (x - x0) / (x1 - x0);
    }
  }
  return p[p.length - 1][1];
}

for (let i = 0; i < 160; i++) {
  const x = Math.round(barX(i));
  if (x > 1748) break;
  const a = valueAt(spanA, x), b = valueAt(spanB, x);
  path(`M${x} ${a}V${b}`, a < b ? '#f8a870' : '#7090f0', 1.3);
}

line('14,488 47,491 57,498 68,508 80,509 268,510 286,517 312,515 362,513 373,505 395,502 449,502 455,492 467,475 482,471 531,469 547,462 712,463 734,467 743,477 767,480 777,486 850,487 866,492 897,489 907,476 966,476 1017,475 1037,467 1060,463 1203,465 1243,470 1314,471 1324,470 1331,433 1343,421 1354,420 1365,384 1408,384 1431,363 1452,363 1475,339', '#808080', 4);
line('14,487 36,488 60,498 89,513 100,519 125,519 138,528 156,533 179,531 201,527 214,523 252,521 264,512 279,509 297,502 350,497 364,486 384,484 405,481 428,480 449,484 458,468 464,462 536,462 548,454 558,459 580,465 592,473 625,475 676,477 689,482 720,490 756,492 772,496 792,497 830,495 843,487 863,480 895,477 907,467 921,461 953,457 984,457 994,463 1005,471 1017,478 1037,477 1050,472 1060,468 1091,463 1136,462 1158,456 1180,454 1200,455 1212,462 1247,467 1279,472 1289,480 1300,482 1312,482 1322,476 1327,468 1333,427 1343,413 1354,412 1365,376 1388,376 1408,370 1420,352 1431,307 1442,296', '#0a9a84', 4);
line(spanA, '#f8a870', 2.5);
line(spanB, '#6e90f0', 2.5);
line('14,488 36,487 46,483 67,480 100,480 123,486 134,480 155,483 167,497 177,483 188,451 200,451 209,462 221,461 232,470 253,462 264,471 275,472 298,465 308,477 319,489 341,486 362,479 384,481 395,473 405,477 417,492 428,499 449,499 461,509 472,505 482,492 493,490 504,483 548,483 558,478 580,478 592,470 625,472 634,465 647,469 657,473 668,467 679,472 698,478 711,468 733,480 756,483 777,465 787,447 809,450 842,464 870,462 886,452 897,452 907,447 918,453 929,468 942,478 950,496 973,493 984,477 994,472 1017,478 1038,475 1050,460 1056,400 1059,369 1072,365 1083,357 1102,307 1113,321 1124,311 1137,300 1147,280 1158,262 1169,268 1179,289 1190,218 1201,200', '#a020dc', 2.5);
line('14,484 45,488 67,491 89,498 123,506 161,511 201,519 223,523 253,524 277,522 312,514 344,507 395,498 420,492 446,487 471,483 504,477 549,473 580,472 667,471 696,475 734,482 779,487 823,488 868,487 912,482 944,478 984,475 1046,472 1091,468 1136,465 1203,461 1270,464 1310,469 1327,468 1354,457 1367,448 1375,441 1398,428 1408,420 1431,400 1452,377 1475,352', '#dc00e8', 4);
line('14,472 36,471 57,467 67,461 78,457 102,457 121,460 147,463 167,469 188,479 209,493 221,498 253,505 264,502 286,492 319,481 350,472 375,465 428,465 449,470 458,467 471,458 493,453 516,450 554,449 589,446 647,447 668,449 696,456 709,458 743,460 777,465 792,470 823,470 853,468 897,463 912,457 942,454 973,459 1002,460 1051,460 1078,451 1113,445 1140,446 1180,440 1218,439 1247,434 1269,434 1288,437 1302,441 1322,442 1331,427 1343,402 1354,382 1365,353 1375,325 1398,292 1420,248 1432,228 1442,217', '#e60808', 4);

// candles: up/down, high, body top, body bottom, low
const candles = `b 493 498 502 506|r 494 494 501 503|b 489 489 509 515|b 504 508 511 513|b 510 513 526 527|b 530 532 537 547|b 535 540 541 543|r 535 536 543 550
r 526 530 532 537|r 529 533 538 541|r 520 522 529 533|b 519 525 529 530|r 517 517 529 532|b 517 517 522 526|b 513 514 520 523|b 518 520 528 531
r 523 526 528 535|r 515 517 526 527|r 513 519 522 523|b 514 517 518 521|r 507 511 517 519|b 507 509 515 517|r 508 509 515 519|r 484 493 512 513
r 487 491 496 498|r 488 489 493 498|b 482 489 490 492|b 487 489 493 496|b 483 486 489 492|b 481 482 485 487|r 477 480 485 487|r 477 479 481 483
r 477 479 481 483|b 470 479 481 483|b 477 479 485 487|b 483 487 488 489|r 479 480 485 487|b 475 479 481 483|b 478 479 485 487|b 483 484 497 498
r 483 484 497 502|r 421 451 485 489|r 440 450 451 455|b 447 449 463 463|b 446 458 461 463|b 460 463 471 473|r 463 465 471 473|r 458 461 463 468
b 459 461 471 473|b 468 471 472 481|r 462 469 474 474|r 462 463 467 470|b 459 460 477 479|b 479 482 490 490|r 484 486 490 490|r 483 485 488 491
b 475 480 485 487|r 477 479 480 483|r 472 479 485 489|b 477 479 484 490|r 470 472 482 483|b 470 473 480 481|b 479 482 492 495|b 487 490 500 501
r 493 497 499 502|r 493 497 499 509|b 493 494 510 511|r 502 504 510 514|r 490 492 502 504|r 483 490 494 497|r 478 481 486 487|b 478 479 486 488
r 480 482 484 488|b 478 482 484 486|b 478 482 484 487|r 474 476 486 487|b 475 477 480 484|r 472 475 480 482|r 468 470 472 477|r 465 467 471 473
b 465 467 475 478|r 465 469 473 474|b 436 437 465 467|b 460 463 469 471|b 463 465 473 475|r 465 466 474 477|b 465 469 475 476|b 472 474 476 478
r 468 472 473 476|r 467 468 472 473|b 468 470 480 484|b 475 479 481 488|r 476 479 481 483|b 477 478 485 490|r 475 477 480 481|r 463 465 476 478
r 445 446 457 465|b 443 447 448 451|r 447 449 453 457|b 448 451 456 457|b 452 455 460 463|b 457 460 465 470|r 455 461 463 466|b 456 459 463 467
b 450 457 461 467|r 448 451 460 463|b 439 450 453 455|r 446 446 457 458|b 443 444 455 460|b 460 461 469 471|b 469 471 476 485|b 476 477 497 498
b 487 490 496 499|r 487 492 500 504|r 470 477 487 488|b 471 475 477 482|r 460 472 477 478|b 465 468 477 478|r 474 476 477 483|r 468 470 475 480
r 449 461 472 473|r 364 370 461 463|r 339 366 386 392|r 347 358 359 372|r 266 326 351 353|b 271 303 307 316|b 310 321 322 323|r 307 308 327 336
r 293 300 309 313|b 240 261 285 299|r 223 261 282 294|b 251 251 270 270`.split(/[|\n]/);

candles.forEach((row, i) => {
  const [type, high, top, bottom, low] = row.trim().split(' ');
  const color = type === 'r' ? '#e81c0c' : '#1458c8';
  const x = Math.round(barX(i));
  path(`M${x} ${high}V${low}`, color, 1.5);
  rect(x - 4, top, 8, Math.max(2, bottom - top), color);
});

// annotations
path('M97 547H113', '#00f', 1.5);
add('path', { d: 'M95 547l7-6v12z', fill: '#00f' });
text(113, 551, '최저 5,100 (10/13)', '#0000f0');
path('M678 443V464', '#f00', 1.2);
add('path', { d: 'M671 461h14l-7 8z', fill: '#f00' });
text(629, 439, '배당락(0,00%)', '#333');
text(1313, 186, '최고 12,450 (04/14)', '#f01010');

// selected box, colours inverted inside
rect(1442, 161, 53, 136, '#1e5ab4');
rect(1442, 203, 53, 32, '#e05ab8');
line('1442,217 1453,205 1465,192 1474,172', '#18a048', 4);
line('1442,296 1453,292 1463,273 1474,256', '#e83cc0', 4);
path('M1451 182H1463', '#18a048', 1.5);
add('path', { d: 'M1462 174v16l7-8z', fill: '#18a048' });
rect(1442, 251, 4, 19, '#f0f48c');
path('M1452 254V296', '#f0f48c', 1.5);
rect(1448, 265, 9, 27, '#f0f48c');
path('M1463 201V296M1474 172V222M1469 200H1479', '#10b050', 1.5);
rect(1459, 216, 8, 80, '#10b850');
rect(1442, 161, 53, 136, 'none', { stroke: '#0000f0', 'stroke-width': 1.5 });
rect(1437, 157, 8, 7, '#0000ff');
rect(1491, 294, 8, 7, '#0000ff');
text(1447, 162, '12,767,11(2708,19)', '#333', 'note');
text(1431, 311, '10,058,92', '#333', 'note');

// lower panels
line('12,737 257,736 453,735 471,729 900,728 906,725 1200,725 1252,724 1321,723 1332,698 1345,682 1355,675 1366,653 1376,644 1386,645 1408,643 1431,620 1452,627 1464,604 1474,593', '#ff6600', 4);
line('12,737 453,737 485,731 900,729 925,726 1321,724 1332,719 1354,704 1376,685 1386,677 1408,664 1431,650 1452,642 1474,626', '#a040a0', 1.3);
line('14,866 24,865 257,865 453,864 460,863 468,864 897,865 906,870 1055,869 1162,869 1196,870 1321,870 1332,773 1345,775 1355,774 1366,802 1376,813 1386,814 1408,812 1420,827 1443,832 1452,837 1464,761 1475,761', '#ff6600', 4);

// frames
add('path', { d: 'M8 149.500H1874M8.500 149V896M8 574.500H1874M8 743.500H1874M8 874.500H1874M8 896.500H1874M1792.500 149V896M1873.500 149V896', class: 'frame' });
months.forEach(([x, label]) => {
  path(`M${x}.5 874V896`, '#999');
  text(x + 2, 890, label, '', 'axis');
});
text(1802, 890, '04/14', '', 'axis');

// axis ticks and labels
function ticks(first, last, step, majors) {
  for (let y = first; y < last; y += step) path(`M1793 ${Math.round(y)}.5h3`, '#999');
  majors.forEach(([y, label]) => {
    path(`M1793 ${y}.5h8`, '#999');
    text(1802, y + 5, label, '', 'axis');
  });
}
ticks(189, 572, 10.15, prices.slice(1).map((y, i) => [y, `${11 - i},000`]));
ticks(577, 740, 8, obvGrid.map((y, i) => [y, `${6 - i}00,000K`]));
ticks(755, 870, 9.5, [[790, '-50,000,00'], [838, '-100,000,0']]);
text(1793, 164, 'LC:135,29', '#e81c0c');
text(1793, 179, 'HC:-3,61', '#1458c8');
rect(1798, 190, 72, 16, '#e81c0c');
text(1802, 203, '12,000', '#fff', 'note');
text(1802, 218, '2,92%', '#e81c0c', 'note');

// legends
function marker(x, y) {
  rect(x, y, 5, 7, '#ccc', { stroke: '#666' });
}
rect(22, 152, 169, 18, '#eee', { stroke: '#bbb' });
marker(13, 157);
marker(201, 157);
marker(671, 157);
[[27, '포스코DX 매물대 수(10)', '#333'], [214, '전환선 9', '#0a9a84'], [282, '기준선 26', '#777'], [357, '후행스팬 26', '#a020dc'],
  [447, '선행스팬1 9,26', '#f8a870'], [557, '선행스팬2 52,26', '#6e90f0'], [683, 'Bollinger Bands중심선 20,2', '#dc00e8'], [882, '상한선', '#e60808']]
  .forEach(([x, label, color]) => text(x, 166, label, color, x < 540 ? 'legend' : ''));
rect(16, 175, 16, 16, '#fff', { stroke: '#222', 'stroke-width': 1.5 });
path('M19 178h10v10h-10zM22 178v10M26 178v10M19 181h10M19 185h10', '#666');

[['전환선 9: 10,885', '#0a9a84'], ['기준선 26: 9,240', '#777'], ['후행스팬 26: 12,000', '#a020dc'],
  ['선행스팬1 9,26: 10,063', '#f8a870'], ['선행스팬2 52,26: 9,240', '#6e90f0']]
  .forEach(([label, color], i) => text(1786, 504 + i * 15, label, color, 'value'));

marker(13, 582);
text(26, 591, 'OBV', '#ff6600');
text(67, 591, 'Signal 9', '#a040a0', 'legend');
marker(13, 751);
text(26, 760, "Bostian's Intraday Intensity Index", '#ff6600', 'legend');
[578, 747].forEach(y => {
  rect(1860, y, 10, 9, '#444');
  path(`M1862 ${y + 2}l6 5M1868 ${y + 2}l-6 5`, '#fff');
});
```
